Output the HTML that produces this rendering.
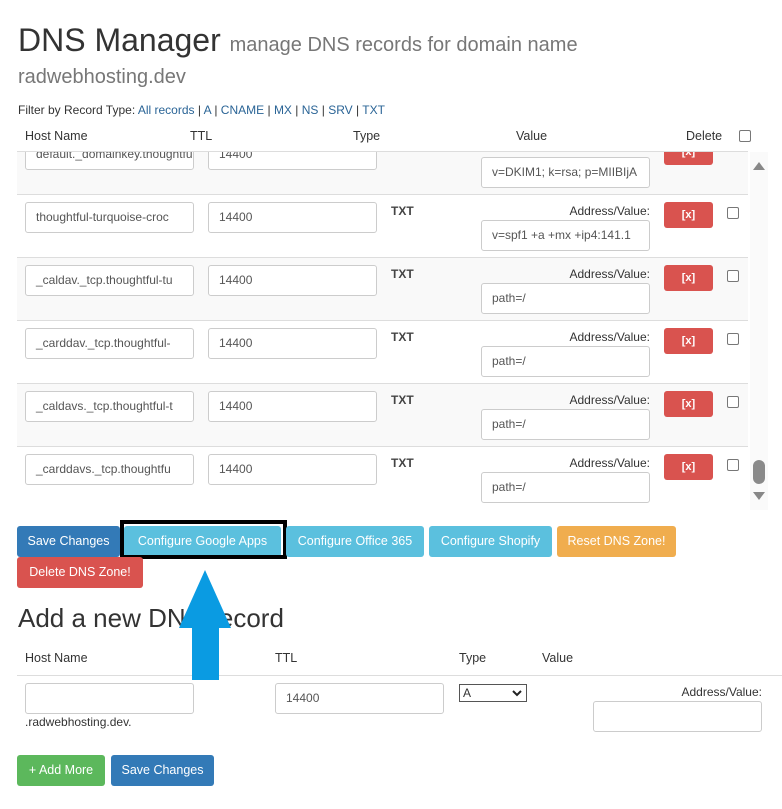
<!DOCTYPE html>
<html><head><meta charset="utf-8"><style>
*{box-sizing:border-box;margin:0;padding:0}
body{width:782px;height:809px;background:#fff;font-family:"Liberation Sans",sans-serif;color:#333;position:relative;overflow:hidden;font-size:12px}
.a{position:absolute}
.inp{position:absolute;border:1px solid #ccc;border-radius:3px;background:#fff;height:31px;padding-left:10px;line-height:29px;font-size:12px;color:#555;overflow:hidden;white-space:nowrap}
.btn{position:absolute;height:31px;border-radius:3px;color:#fff;font-size:12.5px;line-height:31px;text-align:center;white-space:nowrap}
.del{position:absolute;width:49px;height:26px;background:#d9534f;border-radius:3px;color:#fff;font-size:11px;text-align:center;line-height:26px;font-weight:bold}
.cb{position:absolute;width:12px;height:12px;border:1px solid #777;border-radius:2px;background:#fff}
.row{position:absolute;left:17px;width:731px;height:63px;border-bottom:1px solid #ddd}
.lnk{color:#2a6496}
</style></head><body>
<div class="a" style="left:18px;top:22px;font-size:32px;color:#333;white-space:nowrap">DNS Manager <span style="font-size:20px;color:#777">manage DNS records for domain name</span></div>
<div class="a" style="left:18px;top:66px;font-size:20px;color:#777">radwebhosting.dev</div>
<div class="a" style="left:18px;top:103px;font-size:12px">Filter by Record Type: <span class="lnk">All records</span> | <span class="lnk">A</span> | <span class="lnk">CNAME</span> | <span class="lnk">MX</span> | <span class="lnk">NS</span> | <span class="lnk">SRV</span> | <span class="lnk">TXT</span></div>
<div class="a" style="left:25px;top:129px;font-size:12.5px">Host Name</div>
<div class="a" style="left:190px;top:129px;font-size:12.5px">TTL</div>
<div class="a" style="left:353px;top:129px;font-size:12.5px">Type</div>
<div class="a" style="left:516px;top:129px;font-size:12.5px">Value</div>
<div class="a" style="left:686px;top:129px;font-size:12.5px">Delete</div>
<div class="cb" style="left:739px;top:130px"></div>
<div class="a" style="left:17px;top:151px;width:731px;border-top:1px solid #ddd"></div>

<div class="a" style="left:0;top:152px;width:782px;height:358px;overflow:hidden">
 <div class="a" style="left:750px;top:0;width:18px;height:358px;background:#fafafa"></div>
 <div class="a" style="left:753px;top:10px;width:0;height:0;border-left:6px solid transparent;border-right:6px solid transparent;border-bottom:8px solid #888"></div>
 <div class="a" style="left:753px;top:308px;width:12px;height:24px;background:#8a8a8a;border-radius:6px"></div>
 <div class="a" style="left:753px;top:340px;width:0;height:0;border-left:6px solid transparent;border-right:6px solid transparent;border-top:8px solid #888"></div>
 <div class="row" style="top:-20px;background:#f9f9f9"></div>
 <div class="inp" style="left:25px;top:-13px;width:169px">default._domainkey.thoughtful</div>
 <div class="inp" style="left:208px;top:-13px;width:169px">14400</div>
 <div class="inp" style="left:481px;top:5px;width:169px">v=DKIM1; k=rsa; p=MIIBIjA</div>
 <div class="del" style="left:664px;top:-13px">[x]</div>

 <div class="row" style="top:43px"></div>
 <div class="inp" style="left:25px;top:50px;width:169px">thoughtful-turquoise-croc</div>
 <div class="inp" style="left:208px;top:50px;width:169px">14400</div>
 <div class="a" style="left:391px;top:52px;font-size:12px;font-weight:bold;color:#444">TXT</div>
 <div class="a" style="left:540px;top:52px;width:110px;text-align:right">Address/Value:</div>
 <div class="inp" style="left:481px;top:68px;width:169px">v=spf1 +a +mx +ip4:141.1</div>
 <div class="del" style="left:664px;top:50px">[x]</div>
 <div class="cb" style="left:727px;top:55px"></div>

 <div class="row" style="top:106px;background:#f9f9f9"></div>
 <div class="inp" style="left:25px;top:113px;width:169px">_caldav._tcp.thoughtful-tu</div>
 <div class="inp" style="left:208px;top:113px;width:169px">14400</div>
 <div class="a" style="left:391px;top:115px;font-weight:bold;color:#444">TXT</div>
 <div class="a" style="left:540px;top:115px;width:110px;text-align:right">Address/Value:</div>
 <div class="inp" style="left:481px;top:131px;width:169px">path=/</div>
 <div class="del" style="left:664px;top:113px">[x]</div>
 <div class="cb" style="left:727px;top:118px"></div>

 <div class="row" style="top:169px"></div>
 <div class="inp" style="left:25px;top:176px;width:169px">_carddav._tcp.thoughtful-</div>
 <div class="inp" style="left:208px;top:176px;width:169px">14400</div>
 <div class="a" style="left:391px;top:178px;font-weight:bold;color:#444">TXT</div>
 <div class="a" style="left:540px;top:178px;width:110px;text-align:right">Address/Value:</div>
 <div class="inp" style="left:481px;top:194px;width:169px">path=/</div>
 <div class="del" style="left:664px;top:176px">[x]</div>
 <div class="cb" style="left:727px;top:181px"></div>

 <div class="row" style="top:232px;background:#f9f9f9"></div>
 <div class="inp" style="left:25px;top:239px;width:169px">_caldavs._tcp.thoughtful-t</div>
 <div class="inp" style="left:208px;top:239px;width:169px">14400</div>
 <div class="a" style="left:391px;top:241px;font-weight:bold;color:#444">TXT</div>
 <div class="a" style="left:540px;top:241px;width:110px;text-align:right">Address/Value:</div>
 <div class="inp" style="left:481px;top:257px;width:169px">path=/</div>
 <div class="del" style="left:664px;top:239px">[x]</div>
 <div class="cb" style="left:727px;top:244px"></div>

 <div class="row" style="top:295px;border-bottom:none"></div>
 <div class="inp" style="left:25px;top:302px;width:169px">_carddavs._tcp.thoughtfu</div>
 <div class="inp" style="left:208px;top:302px;width:169px">14400</div>
 <div class="a" style="left:391px;top:304px;font-weight:bold;color:#444">TXT</div>
 <div class="a" style="left:540px;top:304px;width:110px;text-align:right">Address/Value:</div>
 <div class="inp" style="left:481px;top:320px;width:169px">path=/</div>
 <div class="del" style="left:664px;top:302px">[x]</div>
 <div class="cb" style="left:727px;top:307px"></div>
</div>

<div class="btn" style="left:17px;top:526px;width:103px;background:#337ab7">Save Changes</div>
<div class="btn" style="left:124px;top:526px;width:157px;background:#5bc0de">Configure Google Apps</div>
<div class="a" style="left:120px;top:520px;width:167px;height:39px;border:4px solid #000"></div>
<div class="btn" style="left:286px;top:526px;width:138px;background:#5bc0de">Configure Office 365</div>
<div class="btn" style="left:429px;top:526px;width:123px;background:#5bc0de">Configure Shopify</div>
<div class="btn" style="left:557px;top:526px;width:119px;background:#f0ad4e">Reset DNS Zone!</div>
<div class="btn" style="left:17px;top:557px;width:126px;background:#d9534f">Delete DNS Zone!</div>

<div class="a" style="left:18px;top:603px;font-size:26px;color:#333;white-space:nowrap">Add a new DNS record</div>
<div class="a" style="left:25px;top:651px;font-size:12.5px">Host Name</div>
<div class="a" style="left:275px;top:651px;font-size:12.5px">TTL</div>
<div class="a" style="left:459px;top:651px;font-size:12.5px">Type</div>
<div class="a" style="left:542px;top:651px;font-size:12.5px">Value</div>
<div class="a" style="left:17px;top:675px;width:765px;border-top:1px solid #ddd"></div>
<div class="inp" style="left:25px;top:683px;width:169px"></div>
<div class="a" style="left:25px;top:715px;font-size:12px">.radwebhosting.dev.</div>
<div class="inp" style="left:275px;top:683px;width:169px">14400</div>
<div class="a" style="left:459px;top:684px;width:68px;height:18px;border:1px solid #555;font-size:12px;line-height:16px;padding-left:3px">A<svg style="position:absolute;right:4px;top:4px" width="10" height="8"><path d="M1 2 L5 6 L9 2" stroke="#222" stroke-width="2" fill="none"/></svg></div>
<div class="a" style="left:650px;top:685px;width:112px;text-align:right">Address/Value:</div>
<div class="inp" style="left:593px;top:701px;width:169px"></div>

<div class="btn" style="left:17px;top:755px;width:88px;height:31px;background:#5cb85c">+ Add More</div>
<div class="btn" style="left:111px;top:755px;width:103px;background:#337ab7">Save Changes</div>

<svg class="a" style="left:0;top:0" width="782" height="809"><path d="M205 570 L231 628 L219 628 L219 680 L192 680 L192 628 L179 628 Z" fill="#0a9be2"/></svg>
</body></html>
